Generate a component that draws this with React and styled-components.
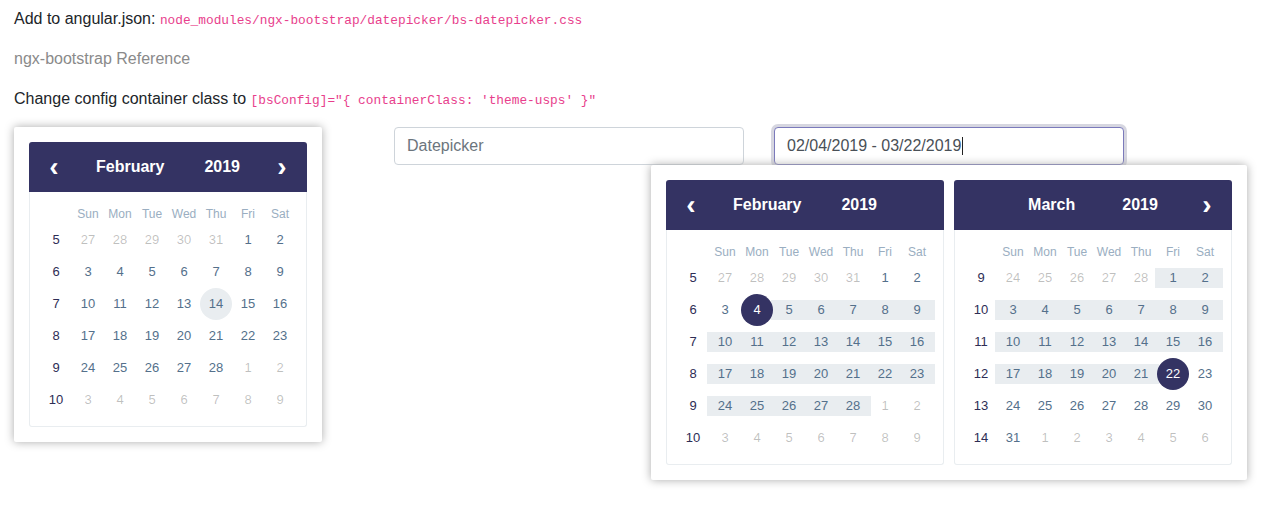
import React from 'react';
import styled, { createGlobalStyle, css } from 'styled-components';

const NAVY = '#343363';

const GlobalStyle = createGlobalStyle`
  html, body { margin: 0; padding: 0; background: #fff; }
  body {
    font-family: "Liberation Sans", Arial, sans-serif;
    font-size: 16px;
    line-height: 1.5;
    color: #212529;
  }
  *, *::before, *::after { box-sizing: border-box; }
`;

const Page = styled.main`
  min-height: 511px;
  padding: 7px 14px 0;
`;

const Para = styled.p`
  margin: 0 0 16px;
  color: ${(p) => (p.$muted ? '#8a8a8a' : '#212529')};
`;

const Code = styled.code`
  font-family: "Liberation Mono", "DejaVu Sans Mono", monospace;
  font-size: 12.8px;
  color: #e83e8c;
`;

const Row = styled.div`
  display: grid;
  grid-template-columns: 380px 380px 380px;
  align-items: start;
`;

const Col = styled.div`
  position: relative;
`;

const PickerBox = styled.div`
  display: inline-flex;
  gap: 10px;
  padding: 15px;
  background: #fff;
  border-radius: 2px;
  box-shadow: 0 0 10px 0 #aaa;
`;

const Dropdown = styled(PickerBox)`
  position: absolute;
  left: -123px;
  top: 38px;
  z-index: 10;
`;

const Calendar = styled.div`
  width: 278px;
`;

const Head = styled.div`
  height: 50px;
  padding: 10px;
  background: ${NAVY};
  border-radius: 3px 3px 0 0;
  display: flex;
  align-items: center;
  justify-content: space-between;
`;

const NavButton = styled.button`
  width: 30px;
  height: 30px;
  padding: 0;
  border: 0;
  background: transparent;
  color: #fff;
  font-family: "Liberation Sans", Arial, sans-serif;
  font-size: 28px;
  font-weight: 700;
  line-height: 1;
  display: flex;
  align-items: center;
  justify-content: center;
  visibility: ${(p) => (p.$hidden ? 'hidden' : 'visible')};
`;

const CurrentButton = styled.button`
  height: 30px;
  padding: 0 5px;
  margin-left: ${(p) => (p.$year ? '8px' : '0')};
  border: 0;
  background: transparent;
  color: #fff;
  font-family: "Liberation Sans", Arial, sans-serif;
  font-size: 16px;
  font-weight: 700;
  line-height: 30px;
`;

const Body = styled.div`
  padding: 12px 10px 10px;
  border: 1px solid #e9edf0;
  border-top: 0;
  border-radius: 0 0 3px 3px;
  background: #fff;
`;

const DaysGrid = styled.div`
  display: grid;
  grid-template-columns: repeat(8, 32px);
  grid-template-rows: 20px;
  grid-auto-rows: 32px;
  position: relative;
  isolation: isolate;
`;

const WeekdayHead = styled.div`
  font-size: 12px;
  line-height: 20px;
  color: #9aaec1;
  text-align: center;
`;

const WeekNo = styled.span`
  display: flex;
  align-items: center;
  justify-content: center;
  font-size: 13px;
  color: #2e2d55;
`;

const Day = styled.span`
  position: relative;
  display: flex;
  align-items: center;
  justify-content: center;
  width: 32px;
  height: 32px;
  font-size: 13px;
  border-radius: 50%;
  color: ${(p) => (p.$selected ? '#fff' : p.$other ? 'rgba(0,0,0,0.25)' : '#54708b')};
  background: ${(p) => (p.$selected ? NAVY : p.$hover ? '#e9edf0' : 'transparent')};
  z-index: ${(p) => (p.$selected ? 1 : 'auto')};
  ${(p) =>
    p.$inRange &&
    css`
      &::before {
        content: '';
        position: absolute;
        z-index: -1;
        top: 6px;
        bottom: 6px;
        left: -2px;
        right: -2px;
        background: #e9edf0;
      }
    `}
`;

const InputBase = styled.input`
  display: block;
  width: 350px;
  height: 38px;
  padding: 6px 12px;
  font-family: "Liberation Sans", Arial, sans-serif;
  font-size: 16px;
  line-height: 24px;
  color: #495057;
  background: #fff;
  border: 1px solid #ced4da;
  border-radius: 4px;
  outline: none;
  &::placeholder { color: #6c757d; }
`;

const FocusedInput = styled.div`
  display: flex;
  align-items: center;
  width: 350px;
  height: 38px;
  padding: 6px 12px;
  font-size: 16px;
  line-height: 24px;
  color: #495057;
  background: #fff;
  border: 1px solid #7b7abb;
  border-radius: 4px;
  box-shadow: 0 0 0 3px rgba(52, 51, 99, 0.2);
`;

const Caret = styled.span`
  display: inline-block;
  width: 1px;
  height: 18px;
  margin-left: 1px;
  background: #222;
`;

const MONTHS = ['January', 'February', 'March', 'April', 'May', 'June', 'July', 'August', 'September', 'October', 'November', 'December'];
const WEEKDAYS = ['Sun', 'Mon', 'Tue', 'Wed', 'Thu', 'Fri', 'Sat'];

function buildWeeks(year, month, firstWeekNo) {
  const first = new Date(year, month, 1);
  const start = new Date(year, month, 1 - first.getDay());
  const weeks = [];
  for (let w = 0; w < 6; w++) {
    const days = [];
    for (let d = 0; d < 7; d++) {
      const date = new Date(start.getFullYear(), start.getMonth(), start.getDate() + w * 7 + d);
      days.push(date);
    }
    weeks.push({ no: firstWeekNo + w, days });
  }
  return weeks;
}

function MonthCalendar({ year, month, firstWeekNo, showPrev = true, showNext = true, range, hoverDay }) {
  const weeks = buildWeeks(year, month, firstWeekNo);
  const t = (d) => d.getTime();
  return (
    <Calendar>
      <Head>
        <NavButton $hidden={!showPrev} aria-label="previous">‹</NavButton>
        <CurrentButton>{MONTHS[month]}</CurrentButton>
        <CurrentButton $year>{year}</CurrentButton>
        <NavButton $hidden={!showNext} aria-label="next">›</NavButton>
      </Head>
      <Body>
        <DaysGrid>
          <WeekdayHead />
          {WEEKDAYS.map((w) => (
            <WeekdayHead key={w}>{w}</WeekdayHead>
          ))}
          {weeks.map((week) => (
            <React.Fragment key={week.no}>
              <WeekNo>{week.no}</WeekNo>
              {week.days.map((date) => {
                const other = date.getMonth() !== month;
                let selected = false;
                let inRange = false;
                if (range && !other) {
                  selected = t(date) === t(range[0]) || t(date) === t(range[1]);
                  inRange = t(date) > t(range[0]) && t(date) < t(range[1]);
                }
                const hover = !other && hoverDay === date.getDate();
                return (
                  <Day key={t(date)} $other={other} $selected={selected} $inRange={inRange} $hover={hover}>
                    {date.getDate()}
                  </Day>
                );
              })}
            </React.Fragment>
          ))}
        </DaysGrid>
      </Body>
    </Calendar>
  );
}

export default function App() {
  const range = [new Date(2019, 1, 4), new Date(2019, 2, 22)];
  return (
    <>
      <GlobalStyle />
      <Page>
        <Para>
          Add to angular.json: <Code>node_modules/ngx-bootstrap/datepicker/bs-datepicker.css</Code>
        </Para>
        <Para $muted>ngx-bootstrap Reference</Para>
        <Para>
          Change config container class to <Code>[bsConfig]="{'{'} containerClass: 'theme-usps' {'}'}"</Code>
        </Para>
        <Row>
          <Col>
            <PickerBox>
              <MonthCalendar year={2019} month={1} firstWeekNo={5} hoverDay={14} />
            </PickerBox>
          </Col>
          <Col>
            <InputBase placeholder="Datepicker" readOnly />
          </Col>
          <Col>
            <FocusedInput role="textbox">
              02/04/2019 - 03/22/2019
              <Caret />
            </FocusedInput>
            <Dropdown>
              <MonthCalendar year={2019} month={1} firstWeekNo={5} showNext={false} range={range} />
              <MonthCalendar year={2019} month={2} firstWeekNo={9} showPrev={false} range={range} />
            </Dropdown>
          </Col>
        </Row>
      </Page>
    </>
  );
}
